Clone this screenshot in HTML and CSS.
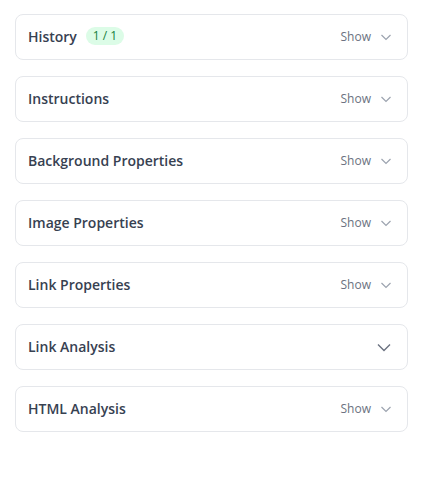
FILE: index.html
```html
<!DOCTYPE html>
<html>
<head>
<meta charset="utf-8">
<link rel="stylesheet" href="styles.css">
</head>
<body>
<div class="panel">
  <div class="card">
    <div class="title-wrap"><span class="title">History</span><span class="badge">1 / 1</span></div>
    <div class="toggle"><span class="show">Show</span><svg class="chev" viewBox="0 0 12 12"><path d="M1.5 4l4.5 4.5 4.5-4.5"/></svg></div>
  </div>
  <div class="card">
    <div class="title-wrap"><span class="title">Instructions</span></div>
    <div class="toggle"><span class="show">Show</span><svg class="chev" viewBox="0 0 12 12"><path d="M1.5 4l4.5 4.5 4.5-4.5"/></svg></div>
  </div>
  <div class="card">
    <div class="title-wrap"><span class="title">Background Properties</span></div>
    <div class="toggle"><span class="show">Show</span><svg class="chev" viewBox="0 0 12 12"><path d="M1.5 4l4.5 4.5 4.5-4.5"/></svg></div>
  </div>
  <div class="card">
    <div class="title-wrap"><span class="title">Image Properties</span></div>
    <div class="toggle"><span class="show">Show</span><svg class="chev" viewBox="0 0 12 12"><path d="M1.5 4l4.5 4.5 4.5-4.5"/></svg></div>
  </div>
  <div class="card">
    <div class="title-wrap"><span class="title">Link Properties</span></div>
    <div class="toggle"><span class="show">Show</span><svg class="chev" viewBox="0 0 12 12"><path d="M1.5 4l4.5 4.5 4.5-4.5"/></svg></div>
  </div>
  <div class="card">
    <div class="title-wrap"><span class="title">Link Analysis</span></div>
    <div class="toggle"><svg class="chev big" viewBox="0 0 16 16"><path d="M2 5.5l6 6 6-6"/></svg></div>
  </div>
  <div class="card">
    <div class="title-wrap"><span class="title">HTML Analysis</span></div>
    <div class="toggle"><span class="show">Show</span><svg class="chev" viewBox="0 0 12 12"><path d="M1.5 4l4.5 4.5 4.5-4.5"/></svg></div>
  </div>
</div>
</body>
</html>
```
FILE: styles.css
```css
html, body {
  margin: 0;
  padding: 0;
  background: #ffffff;
}
body {
  font-family: "Open Sans", "Noto Sans", sans-serif;
}
.panel {
  display: flex;
  flex-direction: column;
  gap: 16px;
  padding: 14px 15px;
}
.card {
  height: 44px;
  border: 1px solid #e5e7eb;
  border-radius: 8px;
  display: flex;
  align-items: center;
  justify-content: space-between;
  padding: 0 15px 0 12px;
}
.title-wrap {
  display: flex;
  align-items: center;
  gap: 9px;
  margin-bottom: 2px;
}
.title {
  font-size: 14px;
  font-weight: 600;
  color: #374151;
}
.badge {
  background: #dcfce7;
  color: #15803d;
  font-size: 12px;
  line-height: 18px;
  padding: 0 7px;
  border-radius: 9px;
}
.toggle {
  display: flex;
  align-items: center;
  gap: 9px;
  margin-bottom: 1px;
}
.show {
  font-size: 12px;
  color: #6b7280;
}
.chev {
  width: 12px;
  height: 12px;
  fill: none;
  stroke: #9ca3af;
  stroke-width: 1.2;
}
.chev.big {
  width: 16px;
  height: 16px;
  stroke: #6b7280;
  stroke-width: 1.4;
}
```
